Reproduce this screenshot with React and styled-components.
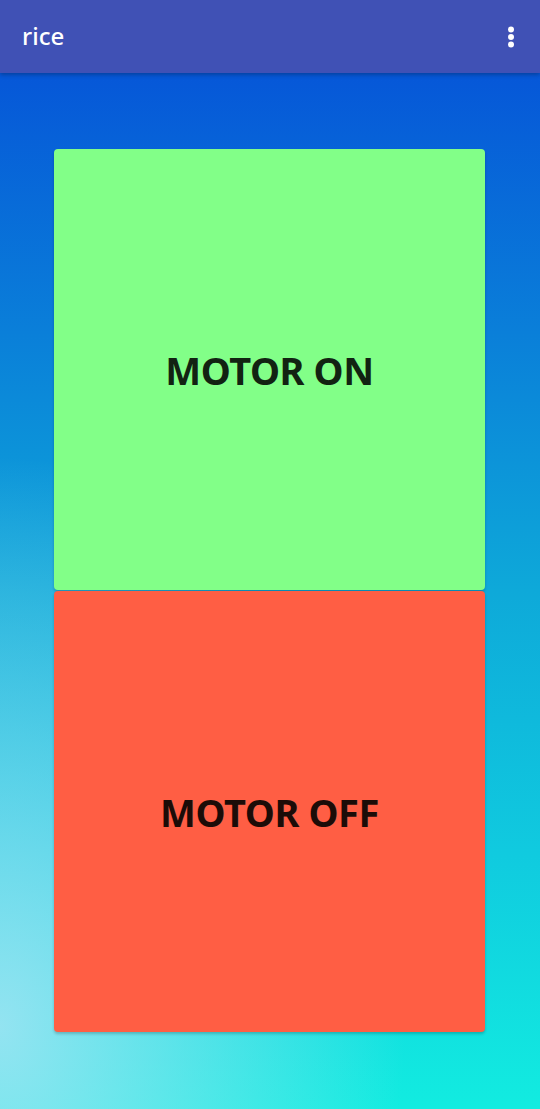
import React from "react";
import styled, { createGlobalStyle } from "styled-components";

const Global = createGlobalStyle`
  html, body { margin: 0; padding: 0; }
  body { font-family: "Noto Sans", "Open Sans", sans-serif; }
  #root { min-height: 1109px; }
`;

const Page = styled.div`
  display: flex;
  flex-direction: column;
  height: 1109px;
  width: 540px;
  overflow: hidden;
`;

const AppBar = styled.header`
  height: 73px;
  flex: 0 0 73px;
  background: #4051b5;
  display: flex;
  align-items: center;
  justify-content: space-between;
  padding: 0 19px 0 22px;
  box-shadow: 0 2px 4px rgba(0, 0, 0, 0.25);
  position: relative;
  z-index: 1;
`;

const Title = styled.h1`
  margin: 0;
  color: #ffffff;
  font-size: 24px;
  font-weight: 500;
  font-family: "Noto Sans", sans-serif;
  line-height: 1;
  padding-bottom: 2px;
`;

const MenuButton = styled.button`
  border: none;
  background: transparent;
  padding: 0;
  width: 20px;
  height: 24px;
  display: flex;
  align-items: center;
  justify-content: center;
  color: #ffffff;
`;

const Body = styled.main`
  flex: 1;
  display: flex;
  flex-direction: column;
  align-items: flex-start;
  padding: 76px 0 0 54px;
  background:
    radial-gradient(ellipse 75% 55% at 0% 92%, rgba(170, 228, 244, 0.85), rgba(170, 228, 244, 0) 100%),
    linear-gradient(to bottom, #0657d8 0%, #0a7fd9 25%, #0ea9d9 50%, #10cadf 75%, #12ece0 100%);
`;

const Stack = styled.div`
  display: flex;
  flex-direction: column;
  gap: 1px;
  width: 431px;
`;

const MotorButton = styled.button`
  height: 441px;
  width: 100%;
  border: none;
  border-radius: 4px;
  background: ${(p) => p.$bg};
  color: ${(p) => p.$fg};
  font-family: "Noto Sans", sans-serif;
  font-weight: 700;
  font-size: 38px;
  letter-spacing: -0.4px;
  display: flex;
  align-items: center;
  justify-content: center;
  box-shadow: 0 2px 3px rgba(0, 0, 0, 0.2);
  cursor: pointer;
  padding: 0;
`;

export default function App() {
  return (
    <>
      <Global />
      <Page>
        <AppBar>
          <Title>rice</Title>
          <MenuButton aria-label="menu">
            <svg width="8" height="22" viewBox="0 0 8 22">
              <circle cx="4" cy="3.5" r="3" fill="#fff" />
              <circle cx="4" cy="11" r="3" fill="#fff" />
              <circle cx="4" cy="18.5" r="3" fill="#fff" />
            </svg>
          </MenuButton>
        </AppBar>
        <Body>
          <Stack>
            <MotorButton $bg="#82ff88" $fg="#122312">MOTOR ON</MotorButton>
            <MotorButton $bg="#ff5e44" $fg="#1c0c08">MOTOR OFF</MotorButton>
          </Stack>
        </Body>
      </Page>
    </>
  );
}
